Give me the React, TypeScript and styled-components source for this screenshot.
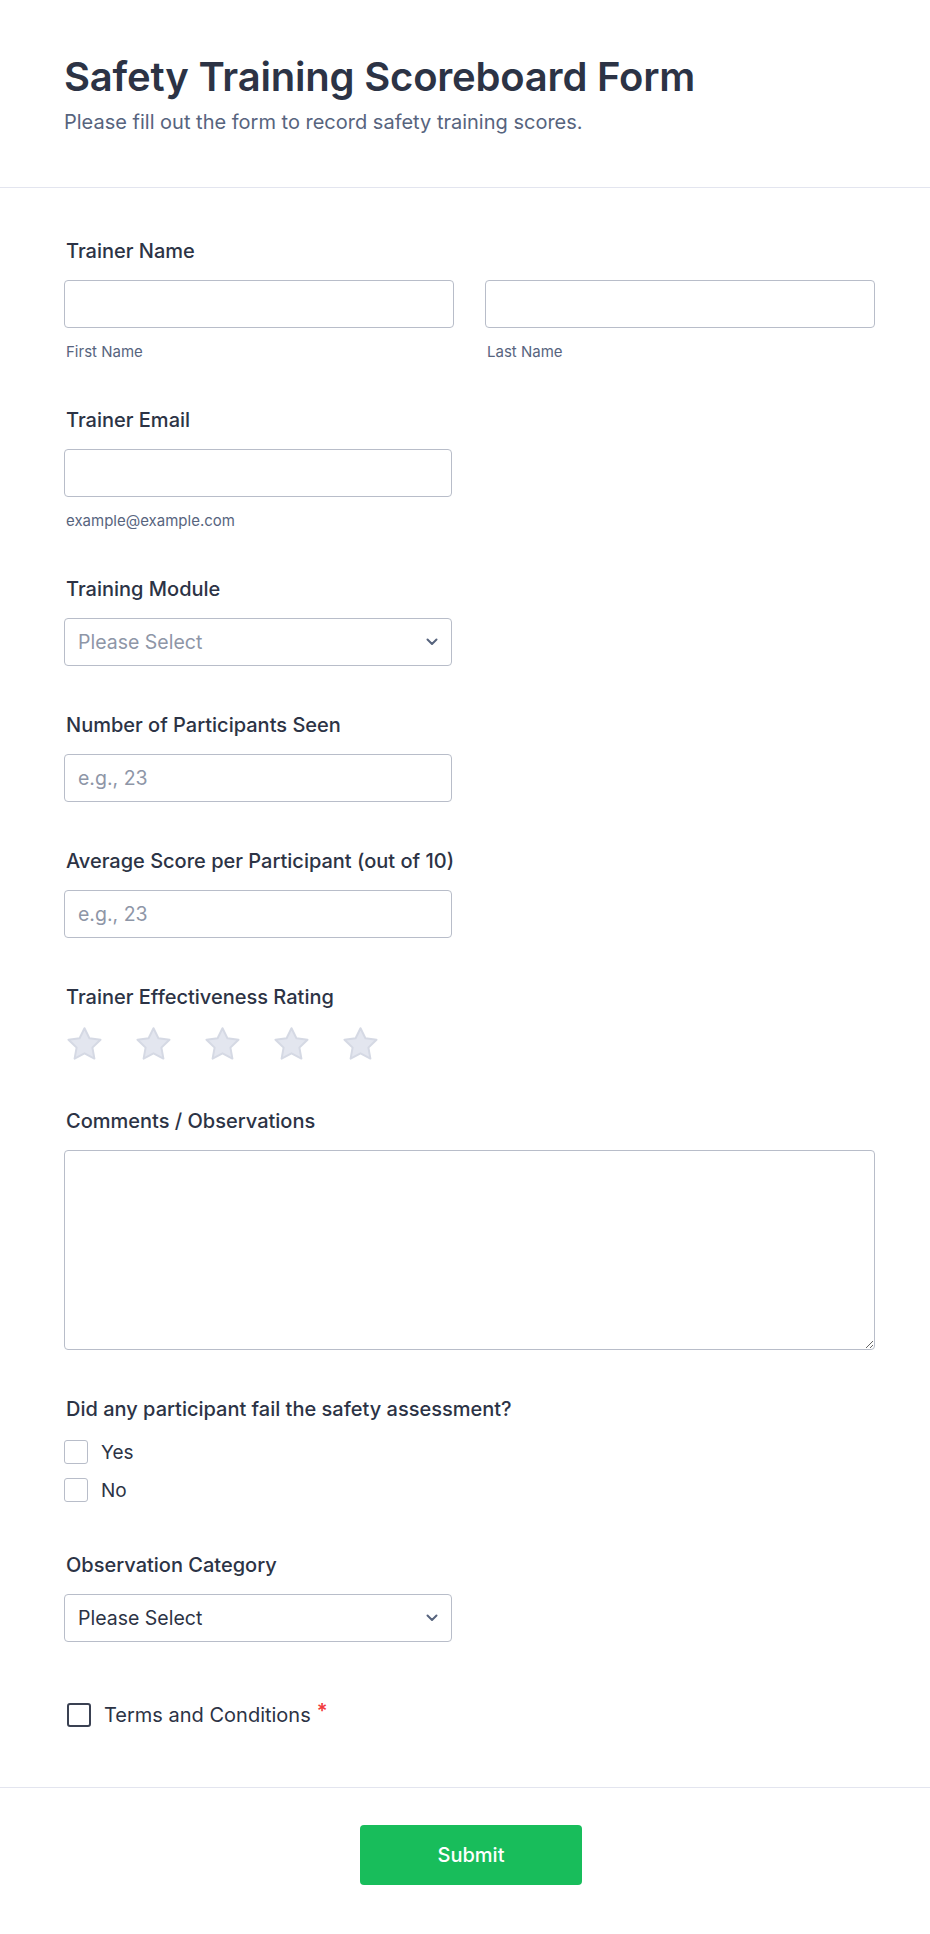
import React from "react";
import styled, { createGlobalStyle } from "styled-components";

const GlobalStyle = createGlobalStyle`
  * { box-sizing: border-box; }
  html, body { margin: 0; padding: 0; background: #ffffff; }
  body {
    font-family: Inter, "Noto Sans", "Liberation Sans", sans-serif;
    color: #2c3345;
    -webkit-font-smoothing: antialiased;
  }
`;

const Page = styled.div`
  width: 930px;
  min-height: 1934px;
  background: #ffffff;
  display: flex;
  flex-direction: column;
`;

const Header = styled.header`
  padding: 53px 64px 51px 64px;
  border-bottom: 1px solid #e3e5ef;
`;

const Title = styled.h1`
  margin: 0;
  font-size: 40px;
  line-height: 48px;
  font-weight: 600;
  color: #2c3345;
  letter-spacing: -0.2px;
`;

const Subtitle = styled.p`
  margin: 7px 0 0 0;
  font-size: 20px;
  line-height: 28px;
  font-weight: 400;
  color: #57647e;
`;

const Form = styled.form`
  padding: 49px 55px 0 64px;
  display: flex;
  flex-direction: column;
  gap: 45px;
`;

const Field = styled.div`
  display: flex;
  flex-direction: column;
`;

const Label = styled.label`
  display: block;
  font-size: 20px;
  line-height: 28px;
  font-weight: 500;
  color: #2c3345;
  padding-left: 2px;
  margin-bottom: 15px;
`;

const TwoCols = styled.div`
  display: grid;
  grid-template-columns: 390px 390px;
  column-gap: 31px;
`;

const Col = styled.div`
  display: flex;
  flex-direction: column;
`;

const TextInput = styled.input<{ $width?: number }>`
  width: ${(p) => (p.$width ? `${p.$width}px` : "100%")};
  height: 48px;
  border: 1px solid #b8bdc9;
  border-radius: 4px;
  padding: 0 13px;
  font-family: inherit;
  font-size: 19.5px;
  color: #2c3345;
  background: #ffffff;
  outline: none;
  &::placeholder {
    color: #8e96a7;
  }
`;

const SubLabel = styled.span`
  display: block;
  margin-top: 15px;
  font-size: 15px;
  line-height: 18px;
  color: #57647e;
  padding-left: 2px;
`;

const SelectBox = styled.div<{ $placeholder?: boolean }>`
  width: 388px;
  height: 48px;
  border: 1px solid #b8bdc9;
  border-radius: 4px;
  padding: 0 13px 0 13px;
  display: flex;
  align-items: center;
  justify-content: space-between;
  font-size: 19.5px;
  color: ${(p) => (p.$placeholder ? "#8e96a7" : "#2c3345")};
  background: #ffffff;
`;

const Chevron = () => (
  <svg width="12" height="8" viewBox="0 0 12 8" fill="none">
    <path d="M1.5 1.5 L6 6 L10.5 1.5" stroke="#57647e" strokeWidth="2" strokeLinecap="round" strokeLinejoin="round" />
  </svg>
);

const Stars = styled.div`
  display: flex;
  gap: 30px;
  padding-left: 1px;
  margin-top: 1px;
`;

const Star = () => (
  <svg width="39" height="35" viewBox="0 1 39 35" fill="none">
    <path
      d="M19.5 2.2 L24.4 12.3 L35.5 13.8 L27.4 21.6 L29.4 32.6 L19.5 27.3 L9.6 32.6 L11.6 21.6 L3.5 13.8 L14.6 12.3 Z"
      fill="#e3e6ef"
      stroke="#d5d9e4"
      strokeWidth="2"
      strokeLinejoin="round"
    />
  </svg>
);

const TextArea = styled.textarea`
  width: 100%;
  height: 200px;
  border: 1px solid #b8bdc9;
  border-radius: 4px;
  padding: 12px 14px;
  font-family: inherit;
  font-size: 19.5px;
  color: #2c3345;
  resize: vertical;
  outline: none;
  display: block;
`;

const Options = styled.div`
  display: flex;
  flex-direction: column;
  gap: 14px;
  padding-top: 2px;
  padding-bottom: 4px;
`;

const OptionRow = styled.div`
  display: flex;
  align-items: center;
  gap: 13px;
  height: 24px;
  font-size: 19px;
  color: #2c3345;
`;

const Box = styled.span<{ $strong?: boolean }>`
  width: 24px;
  height: 24px;
  flex: none;
  border-radius: 3px;
  border: ${(p) => (p.$strong ? "2px solid #3a4152" : "1px solid #b8bdc9")};
  background: #ffffff;
`;

const TermsRow = styled.div`
  display: flex;
  align-items: center;
  gap: 13px;
  height: 24px;
  padding-left: 3px;
  margin-top: 16px;
  font-size: 20px;
  color: #2c3345;
`;

const Required = styled.span`
  color: #f23a3c;
  font-weight: 600;
  margin-left: 6px;
  position: relative;
  top: -4px;
`;

const Footer = styled.div`
  margin-top: 60px;
  border-top: 1px solid #e3e5ef;
  padding: 37px 0 49px 12px;
  display: flex;
  justify-content: center;
`;

const SubmitButton = styled.button`
  width: 222px;
  height: 60px;
  border: none;
  border-radius: 4px;
  background: #18bd5b;
  color: #ffffff;
  font-family: inherit;
  font-size: 20px;
  font-weight: 500;
  cursor: pointer;
`;

export default function App() {
  return (
    <>
      <GlobalStyle />
      <Page>
        <Header>
          <Title>Safety Training Scoreboard Form</Title>
          <Subtitle>Please fill out the form to record safety training scores.</Subtitle>
        </Header>
        <Form onSubmit={(e) => e.preventDefault()}>
          <Field>
            <Label>Trainer Name</Label>
            <TwoCols>
              <Col>
                <TextInput type="text" />
                <SubLabel>First Name</SubLabel>
              </Col>
              <Col>
                <TextInput type="text" />
                <SubLabel>Last Name</SubLabel>
              </Col>
            </TwoCols>
          </Field>
          <Field>
            <Label>Trainer Email</Label>
            <TextInput type="email" $width={388} />
            <SubLabel>example@example.com</SubLabel>
          </Field>
          <Field>
            <Label>Training Module</Label>
            <SelectBox $placeholder>
              <span>Please Select</span>
              <Chevron />
            </SelectBox>
          </Field>
          <Field>
            <Label>Number of Participants Seen</Label>
            <TextInput type="text" placeholder="e.g., 23" $width={388} />
          </Field>
          <Field>
            <Label>Average Score per Participant (out of 10)</Label>
            <TextInput type="text" placeholder="e.g., 23" $width={388} />
          </Field>
          <Field>
            <Label>Trainer Effectiveness Rating</Label>
            <Stars>
              {[0, 1, 2, 3, 4].map((i) => (
                <Star key={i} />
              ))}
            </Stars>
          </Field>
          <Field>
            <Label>Comments / Observations</Label>
            <TextArea />
          </Field>
          <Field>
            <Label>Did any participant fail the safety assessment?</Label>
            <Options>
              <OptionRow>
                <Box />
                <span>Yes</span>
              </OptionRow>
              <OptionRow>
                <Box />
                <span>No</span>
              </OptionRow>
            </Options>
          </Field>
          <Field>
            <Label>Observation Category</Label>
            <SelectBox>
              <span>Please Select</span>
              <Chevron />
            </SelectBox>
          </Field>
          <TermsRow>
            <Box $strong />
            <span>
              Terms and Conditions<Required>*</Required>
            </span>
          </TermsRow>
        </Form>
        <Footer>
          <SubmitButton type="submit">Submit</SubmitButton>
        </Footer>
      </Page>
    </>
  );
}
